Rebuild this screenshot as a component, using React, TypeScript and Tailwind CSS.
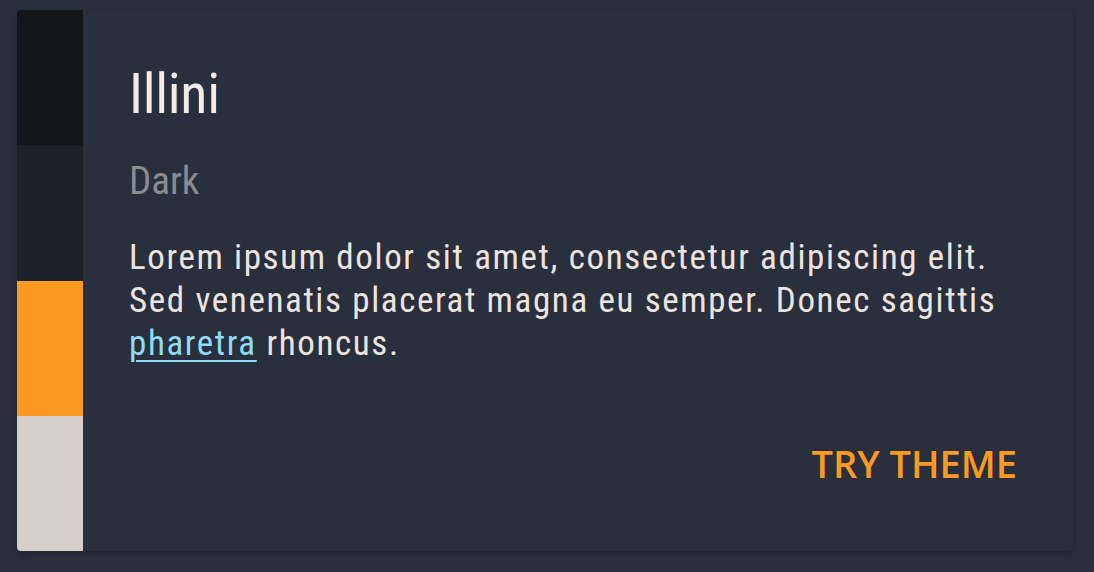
import React from 'react';

const strips = ['bg-[#141519]', 'bg-[#1d2029]', 'bg-[#fb9a22]', 'bg-[#d7cfca]'];

export default function App() {
  return (
    <div className="min-h-[572px] w-full bg-[#2a2f3d] pt-[10px] pl-[17px] pr-[21px]">
      <div className="flex h-[541px] w-[1056px] overflow-hidden rounded-[4px] bg-[#2a2f3e] shadow-[0_2px_6px_rgba(0,0,0,0.25)]">
        <div className="flex w-[66px] flex-col">
          {strips.map((c) => (
            <div key={c} className={`flex-1 ${c}`} />
          ))}
        </div>

        <div className="flex flex-1 flex-col pt-[52px] pl-[46px] pb-[66px] pr-[56px] font-['Roboto',sans-serif] [font-stretch:condensed]">
          <h1 className="text-[56px] leading-[64px] font-normal tracking-[-0.3px] text-[#f5ebe6]">Illini</h1>
          <h2 className="mt-[31px] text-[39px] leading-[48px] text-[#8a8b90]">Dark</h2>
          <p className="mt-[31px] max-w-[880px] text-[35px] leading-[43px] tracking-[1.62px] text-[#ede4df]">
            Lorem ipsum dolor sit amet, consectetur adipiscing elit. Sed venenatis placerat magna eu semper. Donec
            sagittis{' '}
            <a href="#" className="text-[#8fdcf5] underline underline-offset-[5px] decoration-[2px]">
              pharetra
            </a>{' '}
            rhoncus.
          </p>
          <div className="mt-auto flex justify-end">
            <button className="font-['Open_Sans',sans-serif] text-[38px] leading-[44px] font-semibold uppercase text-[#fb9a22] [font-stretch:normal]">
              Try theme
            </button>
          </div>
        </div>
      </div>
    </div>
  );
}
